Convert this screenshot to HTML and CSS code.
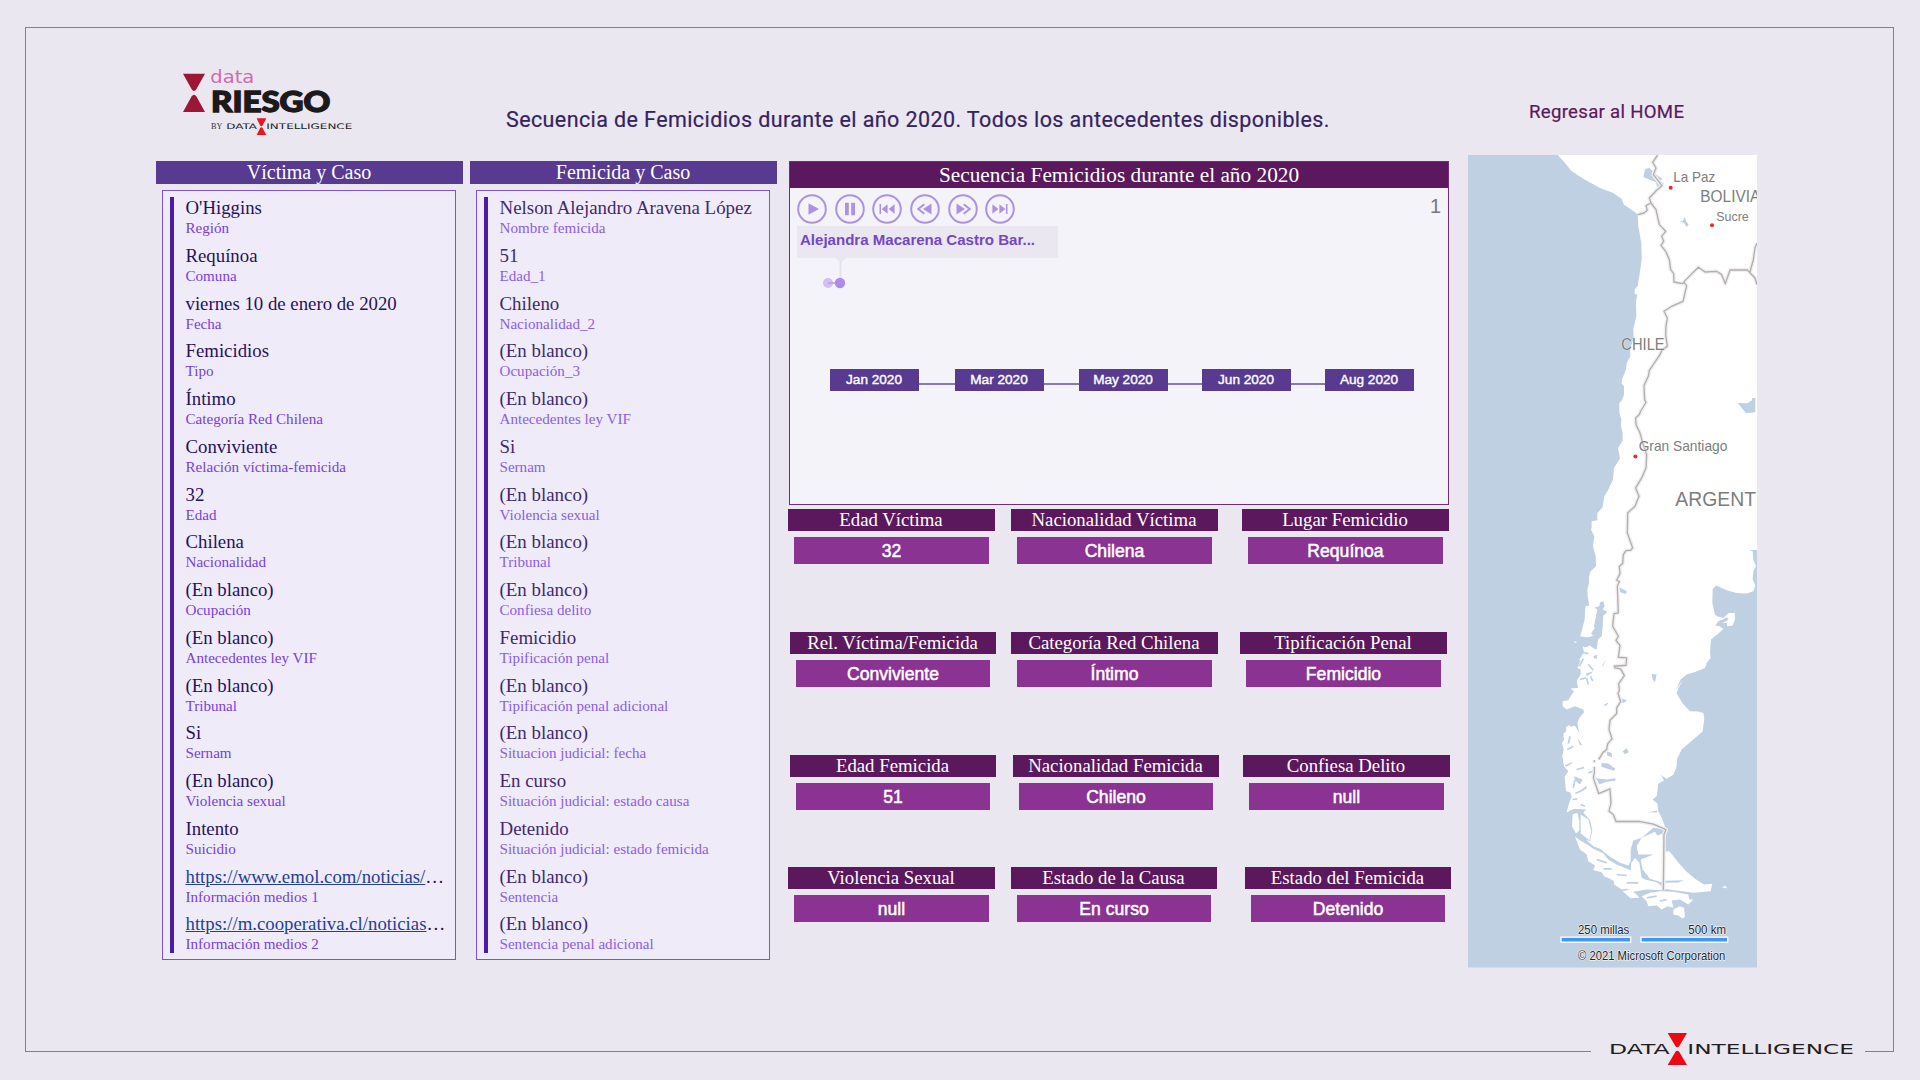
FILE: index.html
```
<!DOCTYPE html>
<html lang="es">
<head>
<meta charset="utf-8">
<title>Secuencia de Femicidios 2020</title>
<link rel="stylesheet" href="styles.css">
</head>
<body>
<div class="frame">
  <header class="top">
    <svg class="brand" viewBox="0 0 600 240" role="img" aria-label="data RIESGO">
      <path fill="#9d1635" d="M39 41H105L79 88Q72 98 65 88ZM39 156H105L79 109Q72 99 65 109Z"/>
      <text class="brand-data" x="121" y="68" textLength="132" lengthAdjust="spacingAndGlyphs">data</text>
      <text class="brand-name" x="123" y="155" textLength="358" lengthAdjust="spacingAndGlyphs">RIESGO</text>
      <text class="brand-by" x="123" y="207" textLength="34" lengthAdjust="spacingAndGlyphs">BY</text>
      <text class="brand-di" x="169" y="207" textLength="92" lengthAdjust="spacingAndGlyphs">DATA</text>
      <path fill="#ee1420" d="M260 175H289L278 196Q274 202 270 196ZM260 225H289L278 205Q274 198 270 205Z"/>
      <text class="brand-di" x="289" y="207" textLength="258" lengthAdjust="spacingAndGlyphs">INTELLIGENCE</text>
    </svg>
    <h1>Secuencia de Femicidios durante el año 2020. Todos los antecedentes disponibles.</h1>
    <a class="home">Regresar al HOME</a>
  </header>

  <main class="board">
    <section class="sheet">
      <h2>Víctima y Caso</h2>
      <dl class="fields">
        <div><dd>O'Higgins</dd><dt>Región</dt></div>
        <div><dd>Requínoa</dd><dt>Comuna</dt></div>
        <div><dd>viernes 10 de enero de 2020</dd><dt>Fecha</dt></div>
        <div><dd>Femicidios</dd><dt>Tipo</dt></div>
        <div><dd>Íntimo</dd><dt>Categoría Red Chilena</dt></div>
        <div><dd>Conviviente</dd><dt>Relación víctima-femicida</dt></div>
        <div><dd>32</dd><dt>Edad</dt></div>
        <div><dd>Chilena</dd><dt>Nacionalidad</dt></div>
        <div><dd>(En blanco)</dd><dt>Ocupación</dt></div>
        <div><dd>(En blanco)</dd><dt>Antecedentes ley VIF</dt></div>
        <div><dd>(En blanco)</dd><dt>Tribunal</dt></div>
        <div><dd>Si</dd><dt>Sernam</dt></div>
        <div><dd>(En blanco)</dd><dt>Violencia sexual</dt></div>
        <div><dd>Intento</dd><dt>Suicidio</dt></div>
        <div><dd><a>https://www.emol.com/noticias/</a>…</dd><dt>Información medios 1</dt></div>
        <div><dd><a>https://m.cooperativa.cl/noticias</a>…</dd><dt>Información medios 2</dt></div>
      </dl>
    </section>

    <section class="sheet soft">
      <h2>Femicida y Caso</h2>
      <dl class="fields">
        <div><dd>Nelson Alejandro Aravena López</dd><dt>Nombre femicida</dt></div>
        <div><dd>51</dd><dt>Edad_1</dt></div>
        <div><dd>Chileno</dd><dt>Nacionalidad_2</dt></div>
        <div><dd>(En blanco)</dd><dt>Ocupación_3</dt></div>
        <div><dd>(En blanco)</dd><dt>Antecedentes ley VIF</dt></div>
        <div><dd>Si</dd><dt>Sernam</dt></div>
        <div><dd>(En blanco)</dd><dt>Violencia sexual</dt></div>
        <div><dd>(En blanco)</dd><dt>Tribunal</dt></div>
        <div><dd>(En blanco)</dd><dt>Confiesa delito</dt></div>
        <div><dd>Femicidio</dd><dt>Tipificación penal</dt></div>
        <div><dd>(En blanco)</dd><dt>Tipificación penal adicional</dt></div>
        <div><dd>(En blanco)</dd><dt>Situacion judicial: fecha</dt></div>
        <div><dd>En curso</dd><dt>Situación judicial: estado causa</dt></div>
        <div><dd>Detenido</dd><dt>Situación judicial: estado femicida</dt></div>
        <div><dd>(En blanco)</dd><dt>Sentencia</dt></div>
        <div><dd>(En blanco)</dd><dt>Sentencia penal adicional</dt></div>
      </dl>
    </section>

    <section class="center">
      <div class="timeline">
        <h2>Secuencia Femicidios durante el año 2020</h2>
        <div class="controls">
          <svg class="btn" viewBox="0 0 30 30"><circle cx="15" cy="15" r="13.8"/><path d="M11.5 9.3L22 15L11.5 20.7Z"/></svg>
          <svg class="btn" viewBox="0 0 30 30"><circle cx="15" cy="15" r="13.8"/><path d="M10 8.8h3.8v12.4H10zM16.2 8.8H20v12.4h-3.8z"/></svg>
          <svg class="btn" viewBox="0 0 30 30"><circle cx="15" cy="15" r="13.8"/><path d="M7.5 10h1.6v10H7.5zM15.6 10.2v9.6L9.6 15zM22.6 10.2v9.6L16.6 15z"/></svg>
          <svg class="btn" viewBox="0 0 30 30"><circle cx="15" cy="15" r="13.8"/><path d="M21.5 9.6v10.8L13 15z"/><path class="chev" d="M14.3 10.2L8.3 15L14.3 19.8"/></svg>
          <svg class="btn" viewBox="0 0 30 30"><circle cx="15" cy="15" r="13.8"/><path d="M8.5 9.6v10.8L17 15z"/><path class="chev" d="M15.7 10.2L21.7 15L15.7 19.8"/></svg>
          <svg class="btn" viewBox="0 0 30 30"><circle cx="15" cy="15" r="13.8"/><path d="M20.9 10h1.6v10h-1.6zM14.4 10.2v9.6l6-4.8zM7.4 10.2v9.6l6-4.8z"/></svg>
          <span class="step">1</span>
        </div>
        <div class="callout">Alejandra Macarena Castro Bar...</div>
        <svg class="dots" viewBox="0 0 40 31"><path fill="#eae7f1" d="M16 0H27L21.5 5Z"/><path stroke="#e6e1f1" stroke-width="2" d="M21.5 3V22"/><circle cx="9" cy="25" r="5" fill="#d0bff3"/><path stroke="#b79dec" stroke-width="1.5" d="M9 25H21"/><circle cx="21" cy="25" r="5.2" fill="#ae8aec"/></svg>
        <div class="months"><span>Jan 2020</span><i></i><span>Mar 2020</span><i></i><span>May 2020</span><i></i><span>Jun 2020</span><i></i><span>Aug 2020</span></div>
      </div>

      <div class="cards row-a">
        <div class="card"><h3>Edad Víctima</h3><p>32</p></div>
        <div class="card"><h3>Nacionalidad Víctima</h3><p>Chilena</p></div>
        <div class="card"><h3>Lugar Femicidio</h3><p>Requínoa</p></div>
      </div>
      <div class="cards row-b">
        <div class="card"><h3>Rel. Víctima/Femicida</h3><p>Conviviente</p></div>
        <div class="card"><h3>Categoría Red Chilena</h3><p>Íntimo</p></div>
        <div class="card"><h3>Tipificación Penal</h3><p>Femicidio</p></div>
      </div>
      <div class="cards row-c">
        <div class="card"><h3>Edad Femicida</h3><p>51</p></div>
        <div class="card"><h3>Nacionalidad Femicida</h3><p>Chileno</p></div>
        <div class="card"><h3>Confiesa Delito</h3><p>null</p></div>
      </div>
      <div class="cards row-d">
        <div class="card"><h3>Violencia Sexual</h3><p>null</p></div>
        <div class="card"><h3>Estado de la Causa</h3><p>En curso</p></div>
        <div class="card"><h3>Estado del Femicida</h3><p>Detenido</p></div>
      </div>
    </section>

    <svg class="map" viewBox="24 226 867 2438" preserveAspectRatio="none">
      <rect x="24" y="226" width="867" height="2438" fill="#bfd0e3"/>
      <!-- mainland -->
      <path fill="#fff" d="M293 226L315 250L335 275L375 300L420 325L460 340L485 358L492 375L515 390L533 404L535 440L544 490L545 540L538 590L533 618L524 630V642L532 645L528 665L529 710L520 748L521 775L511 805V830L500 850L498 870L486 900L485 912L492 920V945L486 962L478 970V1000L484 1020L483 1040L488 1060V1083L474 1105L480 1137L462 1165L459 1200L445 1230L433 1250L428 1283L412 1300V1322L395 1325V1345L393 1350L403 1370L399 1400L407 1430L408 1460L392 1475L387 1490V1510L382 1530L383 1550L388 1578L376 1580L374 1620L361 1670L385 1674L400 1668L393 1662L404 1645L402 1640L412 1590L403 1584L418 1580L420 1568L430 1565L434 1580L428 1590L442 1597L430 1608L428 1640L425 1670L414 1680L410 1710L400 1706L390 1698L375 1704L368 1700L372 1718L357 1742H362L352 1765L362 1770V1785L350 1804L354 1825L332 1826L342 1836L333 1848L325 1862L308 1865L308 1880L320 1890L345 1880L370 1890L372 1898L358 1915L352 1930L358 1960L346 1940L340 1938L332 1942L328 1936L318 1942L319 1955L310 1962L312 1980L306 1990L311 2010L307 2030L312 2060L325 2075L314 2092L318 2135L330 2138L335 2150L326 2175L320 2198L342 2188L378 2190L370 2200L390 2222L397 2252L390 2285L378 2280L400 2300L420 2308L450 2332L480 2350L505 2358L512 2345L512 2310L520 2283L545 2275L580 2245L605 2248L618 2250L605 2215L595 2195L592 2172L578 2160L590 2150L595 2113L612 2103L605 2090L600 2085L620 2098L640 2086L650 2060L651 2038L665 2010L700 1980L728 1955L733 1915L730 1900L715 1896L690 1895L668 1872L650 1842L655 1825L670 1800L648 1830L662 1800L680 1785L705 1777L735 1765L740 1750L752 1735L750 1720L753 1680L775 1662L790 1648L778 1640L766 1638L775 1625L785 1620L765 1605L757 1570L758 1530L768 1518L800 1532L830 1540L860 1542L880 1535L886 1518L878 1500L880 1475L888 1460L880 1440L878 1415L866 1411H891V226Z"/>
      <!-- islands and southern tip -->
      <path fill="#fff" d="M770 1610L790 1615L806 1600L824 1600L825 1620L818 1638L802 1640L800 1630L788 1630L806 1620L800 1612L785 1622ZM338 2205L352 2200L358 2225V2252L348 2262L336 2240ZM362 2205L385 2220L394 2255L388 2282L362 2262ZM345 2272L362 2284L385 2297L400 2308L430 2322L445 2340L470 2355L500 2368L513 2372V2352L525 2335L538 2350L545 2395L555 2400L590 2408L612 2425V2432L560 2430L520 2437L500 2428L485 2430L462 2415V2405L450 2398L432 2390L425 2378L400 2372L405 2358L385 2345L380 2325L360 2310ZM545 2275L585 2257L592 2268L608 2262V2410L570 2398L548 2370L542 2340L580 2325L535 2325L530 2300ZM612 2317L628 2315L640 2330L660 2355L680 2377L705 2398L732 2415L757 2413L752 2435L700 2440L650 2433L612 2428ZM488 2435L510 2430L530 2445L538 2455L512 2456ZM545 2450L570 2440L600 2435L640 2437L685 2445L688 2460L700 2460L685 2475L660 2460L635 2463L640 2485L622 2480L605 2490L590 2478L565 2480L560 2465ZM640 2490L660 2480L672 2485L675 2512L668 2517L655 2508L640 2505ZM785 2425L795 2418L802 2427L792 2424ZM340 1685L352 1687L346 1690Z"/>
      <!-- lakes and channels -->
      <path fill="#bfd0e3" d="M550 292L555 268L568 265L595 290L608 297L600 303L612 312L592 326L588 308ZM658 424L668 424L675 412L678 424L686 435L680 442L672 430ZM833 970L862 971L886 956V998L858 1001L848 988ZM876 956L886 955V963H876ZM478 1523L500 1535L498 1543L480 1538ZM575 1783L590 1785L585 1808L578 1800ZM480 1855L502 1862L490 1870L478 1866ZM428 1878L446 1868L440 1878ZM440 2015L455 2020L456 2033L442 2028ZM488 2016L500 2006L506 2018L495 2024ZM425 2050L445 2052L466 2068L462 2074L424 2062ZM412 2097L440 2100L466 2096V2104L440 2107L418 2115L404 2088ZM612 2404L672 2402L655 2409L612 2410ZM565 2198L592 2193L590 2199ZM400 1730L412 1725L410 1738L402 1736ZM378 1782L400 1775L395 1780L380 1790ZM425 1760L438 1740L430 1758ZM342 2090L368 2100L360 2115L346 2103ZM352 1975L366 1995L360 1998ZM365 2130L380 2118L378 2130Z"/>
      <path class="channels" d="M368 1718L385 1722M370 1738L358 1760M385 1755L400 1772M392 1790L398 1805M380 1796L385 1815M360 1800L378 1795M346 2142L372 2130M338 2160L352 2158M362 2175L375 2180M322 2010L340 2000M316 2060L335 2050M350 2070L372 2064M385 2080L398 2075M345 2100L340 2125M330 1970L325 1992M410 2340L440 2350M430 2368L455 2368M470 2385L500 2388M500 2410L535 2410M560 2455L590 2450M600 2465L620 2460"/>
      <!-- borders -->
      <g class="border-halo"><path id="b" d="M593 226L578 248L588 265L580 285L592 300L606 318L590 332L568 355L573 370L558 378L562 392L552 400L533 405M573 370L588 390L598 435L617 455L605 470L611 485L603 497L617 515L628 540L632 570L641 582L642 607L668 612L675 603L715 563L735 577L770 575L785 585L796 612L810 571H862L885 595L891 615M870 577L880 540L885 505L891 490M672 608L680 618L669 665L635 680L612 695L622 715L618 740L617 765L622 800L606 812L600 825L568 872L565 890L552 918L554 960L558 968L542 995L538 1005L527 1015L528 1035L540 1060L548 1090L560 1125L558 1165L545 1195L527 1225L537 1250L525 1280L503 1300L502 1360L518 1405L512 1412L498 1413L490 1425L488 1452L478 1460L480 1482L470 1502L478 1506L472 1520L475 1600L462 1602L458 1640L475 1670L468 1682L480 1698L475 1733L500 1735L498 1757L463 1760L465 1765L482 1768L493 1788L476 1812L478 1832L474 1842L482 1866L470 1885V1902L450 1922L447 1950L456 1978L443 1993L440 2010L428 2020L416 2040M403 2042V2048M403 2062V2080L400 2095L416 2142L450 2128L453 2170L447 2195L460 2205L468 2226H540L580 2234L618 2250L612 2265L610 2432"/></g>
      <use href="#b" class="border"/>
      <g fill="#ee2a24"><circle cx="632" cy="324" r="6"/><circle cx="756" cy="437" r="6"/><circle cx="526" cy="1131" r="6"/></g>
      <g class="places">
        <text x="640" y="306" font-size="43" textLength="126" lengthAdjust="spacingAndGlyphs">La Paz</text>
        <text x="721" y="367" font-size="50" textLength="180" lengthAdjust="spacingAndGlyphs">BOLIVIA</text>
        <text x="769" y="424" font-size="37" textLength="97" lengthAdjust="spacingAndGlyphs">Sucre</text>
        <text x="484" y="811" font-size="49" textLength="130" lengthAdjust="spacingAndGlyphs">CHILE</text>
        <text x="536" y="1113" font-size="43" textLength="266" lengthAdjust="spacingAndGlyphs">Gran Santiago</text>
        <text x="646" y="1278" font-size="62" textLength="242" lengthAdjust="spacingAndGlyphs">ARGENT</text>
      </g>
      <g fill="#4296f5" stroke="#fff" stroke-width="4"><rect x="303" y="2573" width="209" height="15"/><rect x="543" y="2573" width="260" height="15"/></g>
      <g class="legend">
        <text x="354" y="2564" textLength="154" lengthAdjust="spacingAndGlyphs">250 millas</text>
        <text x="685" y="2564" textLength="113" lengthAdjust="spacingAndGlyphs">500 km</text>
        <text x="354" y="2641" textLength="442" lengthAdjust="spacingAndGlyphs">© 2021 Microsoft Corporation</text>
      </g>
    </svg>
  </main>

  <div class="signature">
    <svg viewBox="0 0 822 108" role="img" aria-label="Data Intelligence">
      <text class="sign" x="54" y="69" textLength="182" lengthAdjust="spacingAndGlyphs">DATA</text>
      <path fill="#ea0a16" d="M230 6H288L265 45Q259 53 253 45ZM230 102H288L265 63Q259 55 253 63Z"/>
      <text class="sign" x="289" y="69" textLength="500" lengthAdjust="spacingAndGlyphs">INTELLIGENCE</text>
    </svg>
  </div>
</div>
</body>
</html>
```
FILE: styles.css
```
* { box-sizing: border-box; margin: 0; padding: 0; }

body {
  width: 1920px;
  height: 1080px;
  padding: 27px 26px 28px 25px;
  background: #eae7f1;
  overflow: hidden;
}

h1, h2, h3 { font-weight: 400; }

.frame {
  position: relative;
  height: 1025px;
  border: 1px solid #76869a;
}

.top {
  display: flex;
  height: 127px;
  padding: 32px 0 0 144px;
}

.brand { width: 200px; height: 80px; flex: none; }
.brand-data { font: 400 53px "DejaVu Sans", sans-serif; fill: #cf6bb0; }
.brand-name { font: 900 83px Lato, sans-serif; fill: #1d1a1b; stroke: #1d1a1b; stroke-width: 4; }
.brand-by { font: 400 26px "Liberation Serif", serif; fill: #333; }
.brand-di { font: 400 23px "DejaVu Sans", sans-serif; fill: #222; }

.top h1 {
  width: 826px;
  margin: 46px 0 0 136px;
  font: 400 21.5px/28px Roboto, sans-serif;
  letter-spacing: 0.4px;
  white-space: nowrap;
  color: #35235f;
  -webkit-text-stroke: .2px #35235f;
}

.home {
  margin: 38px 0 0 197px;
  font: 400 18.6px/28px Roboto, sans-serif;
  letter-spacing: 0.3px;
  white-space: nowrap;
  color: #5b185c;
  -webkit-text-stroke: .2px #5b185c;
}

.board {
  display: flex;
  align-items: flex-start;
  padding-left: 130px;
}

.sheet { width: 307px; margin: 6px 7px 0 0; }
.sheet h2 {
  height: 22.5px;
  padding-right: 1px;
  font: 20px/22px "Liberation Serif", serif;
  text-align: center;
  color: #fff;
  background: #583b91;
}

.fields {
  position: relative;
  width: 294px;
  height: 770px;
  margin: 6.5px 0 0 6px;
  padding: 6px 0 0 22.5px;
  border: 1.5px solid #7f50dc;
  background: #f0ebf9;
  font-family: "Liberation Serif", serif;
}
.fields::before {
  content: "";
  position: absolute;
  left: 7px;
  top: 6px;
  width: 4px;
  height: 756px;
  background: #4a1ba5;
}
.fields div { height: 47.78px; white-space: nowrap; }
.fields dd { font-size: 18.8px; line-height: 22px; color: #27115f; }
.fields dt { font-size: 15.1px; line-height: 18px; color: #7640e2; }
.fields a { color: #1f3f98; text-decoration: underline; }
.soft dd { color: #41296f; font-size: 18.9px; }
.soft dt { color: #8b5ee6; }

.center { width: 660px; margin: 6px 19px 0 5px; }

.timeline {
  height: 344px;
  border: 1.5px solid #762b79;
  background: #f5f3fa;
}
.timeline h2 {
  height: 26px;
  font: 21.3px/27px "Liberation Serif", serif;
  text-align: center;
  color: #fff;
  background: #5b185c;
}

.controls { display: flex; gap: 7.7px; padding: 6px 7px 0 7px; }
.btn { width: 30px; height: 30px; fill: #ad93df; }
.btn circle, .chev { fill: none; stroke: #ad93df; stroke-width: 2; }
.step {
  margin-left: auto;
  font: 20px/24px "Liberation Sans", sans-serif;
  color: #777;
}

.callout {
  width: 261px;
  height: 32px;
  margin: 2px 0 0 7px;
  padding-left: 3px;
  font: bold 15.05px/28px "Liberation Sans", sans-serif;
  color: #7347c6;
  background: #eae7f1;
}

.dots { display: block; width: 40px; height: 31px; margin-left: 29px; }

.months {
  display: grid;
  grid-template-columns: 89px 36px 89px 35px 89px 34px 89px 34px 89px;
  align-items: center;
  margin: 80px 0 0 39.5px;
}
.months span {
  height: 21.5px;
  font: 13.6px/22px "Liberation Sans", sans-serif;
  text-align: center;
  color: #fff;
  background: #583b91;
  -webkit-text-stroke: .4px #fff;
}
.months i { height: 2px; margin-top: 8px; background: #8b78bb; }

.cards { display: grid; height: 123px; }
.row-a { grid-template-columns: 207px 16px 207px 24px 207px; margin: 4px 0 0 -1px; }
.row-b { grid-template-columns: 206px 15px 207px 22px 207px; margin-left: 1px; }
.row-c { grid-template-columns: 206px 17px 206px 24px 207px; height: 112px; margin-left: 1px; }
.row-d { grid-template-columns: 207px 16px 206px 28px 206px; margin-left: -1px; }
.card:nth-child(1) { grid-column: 1; }
.card:nth-child(2) { grid-column: 3; }
.card:nth-child(3) { grid-column: 5; }
.card h3 {
  height: 21.5px;
  padding-right: 1px;
  font: 18.8px/21px "Liberation Serif", serif;
  text-align: center;
  white-space: nowrap;
  color: #fff;
  background: #5b185c;
}
.card p {
  height: 27px;
  margin: 6.5px 6px 0;
  font: 17.6px/28px "Liberation Sans", sans-serif;
  text-align: center;
  color: #fff;
  background: #8a3393;
  -webkit-text-stroke: .5px #fff;
}

.map { display: block; flex: none; width: 289px; height: 812.5px; }
.channels { fill: none; stroke: #bfd0e3; stroke-width: 5; }
.border-halo { fill: none; stroke: #f0eeee; stroke-width: 12; stroke-linejoin: round; }
.border { fill: none; stroke: #b3afb0; stroke-width: 4; stroke-linejoin: round; }
.places text {
  font-family: "Liberation Sans", sans-serif;
  fill: #7d7d7d;
  stroke: #fff;
  stroke-width: 2;
  paint-order: stroke;
}
.legend text {
  font: 37px "Liberation Sans", sans-serif;
  fill: #222;
  stroke: #fff;
  stroke-width: 3;
  paint-order: stroke;
}

/* wordmark sits over the bottom border */
.signature {
  position: absolute;
  right: 28px;
  bottom: -16px;
  width: 274px;
  height: 36px;
  background: #eae7f1;
}
.signature svg { display: block; width: 274px; height: 36px; }
.sign { font: 400 44px "DejaVu Sans", sans-serif; fill: #211e20; }
```
